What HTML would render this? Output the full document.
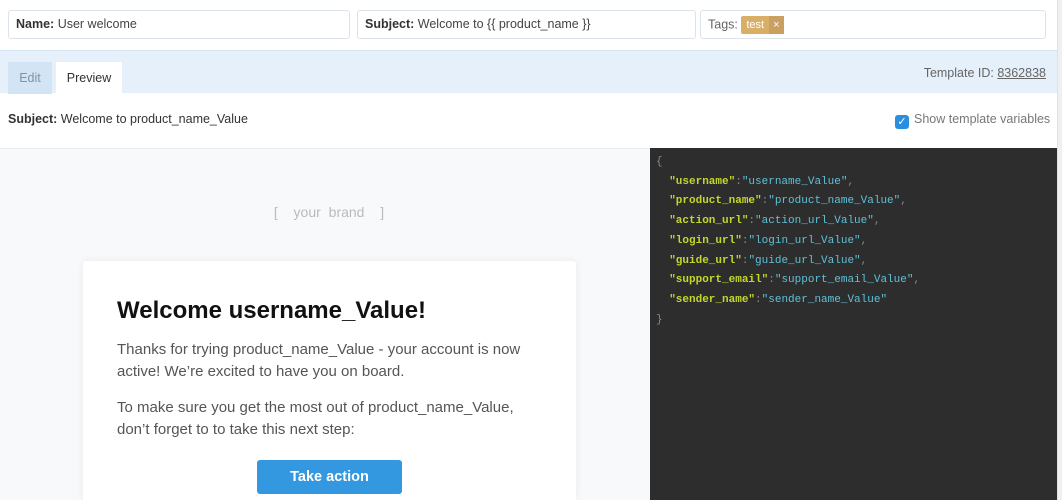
<!DOCTYPE html>
<html style="height:500px;overflow:hidden"><head><style>
*{margin:0;padding:0;box-sizing:border-box}
body{width:1062px;height:500px;overflow:hidden;background:#fff;font-family:"Liberation Sans",sans-serif;position:relative}
.in{position:absolute;top:10px;height:29px;border:1px solid #dde3ea;border-radius:3px;font-size:12.5px;color:#444;padding:6px 7px;white-space:nowrap}
.in b{color:#333}
.band{position:absolute;left:0;top:50px;width:1057px;height:43px;background:#e5f0fa;border-top:1px solid #d6e4f2}
.tab{position:absolute;top:11px;height:32px;font-size:12.5px;padding:9px 0;text-align:center}
.strip{position:absolute;right:0;top:0;width:5px;height:500px;background:#f0f0f0;border-left:1px solid #e2e2e2}
.code{position:absolute;left:650px;top:148px;width:407px;height:352px;background:#2d2d2d;font-family:"Liberation Mono",monospace;font-size:11px;line-height:19.7px;padding:5px 0 0 6px;color:#888;white-space:pre}
.k{color:#c3d82a;font-weight:bold}.v{color:#5fc1d8}
p{font-size:15px;color:#555;line-height:22px}
</style></head><body>
<div class="in" style="left:8px;width:342px"><b>Name:</b> User welcome</div>
<div class="in" style="left:357px;width:339px"><b>Subject:</b> Welcome to {{ product_name }}</div>
<div class="in" style="left:700px;width:346px;padding-top:5px;color:#666">Tags: <span style="display:inline-block;background:#d9ae67;color:#fff;font-size:11px;border-radius:2px;height:18px;line-height:18px;vertical-align:middle"><span style="padding:0 5px">test</span><span style="background:#c9a060;padding:0 4px;display:inline-block">×</span></span></div>
<div class="band">
<div class="tab" style="left:8px;width:44px;background:#d3e4f5;color:#7e93a8">Edit</div>
<div class="tab" style="left:56px;width:66px;background:#fff;color:#333">Preview</div>
<div style="position:absolute;right:11px;top:15px;font-size:12.5px;color:#666">Template ID: <u>8362838</u></div>
</div>
<div style="position:absolute;left:8px;top:112px;font-size:12.5px;color:#333"><b>Subject:</b> Welcome to product_name_Value</div>
<div style="position:absolute;left:895px;top:112px;font-size:12.5px;color:#777"><span style="display:inline-block;width:14px;height:14px;background:#2b8fe0;border-radius:3px;color:#fff;font-size:11px;text-align:center;line-height:14px;vertical-align:-2px;margin-right:5px">✓</span>Show template variables</div>
<div style="position:absolute;left:0;top:148px;width:650px;height:352px;background:#f8f9fb;border-top:1px solid #e8ebef"></div>
<div style="position:absolute;left:0;top:204px;width:658px;text-align:center;font-size:14px;color:#bbb;word-spacing:4px">[&nbsp;&nbsp;your brand&nbsp;&nbsp;]</div>
<div style="position:absolute;left:83px;top:261px;width:493px;height:239px;background:#fff;border-radius:3px 3px 0 0;box-shadow:0 0 8px rgba(0,0,0,.07);padding:34px 34px">
<div style="font-size:24px;font-weight:bold;color:#111;margin-bottom:14px;margin-top:2px">Welcome username_Value!</div>
<p>Thanks for trying product_name_Value - your account is now active! We’re excited to have you on board.</p>
<p style="margin-top:14px">To make sure you get the most out of product_name_Value, don’t forget to to take this next step:</p>
<div style="position:absolute;left:174px;top:199px;width:145px;height:34px;background:#3498e0;border-radius:3px;color:#fff;font-weight:bold;font-size:14.5px;text-align:center;line-height:34px">Take action</div>
</div>
<div class="code">{
  <span class="k">"username"</span>:<span class="v">"username_Value"</span>,
  <span class="k">"product_name"</span>:<span class="v">"product_name_Value"</span>,
  <span class="k">"action_url"</span>:<span class="v">"action_url_Value"</span>,
  <span class="k">"login_url"</span>:<span class="v">"login_url_Value"</span>,
  <span class="k">"guide_url"</span>:<span class="v">"guide_url_Value"</span>,
  <span class="k">"support_email"</span>:<span class="v">"support_email_Value"</span>,
  <span class="k">"sender_name"</span>:<span class="v">"sender_name_Value"</span>
}</div>
<div class="strip"></div>
</body></html>
